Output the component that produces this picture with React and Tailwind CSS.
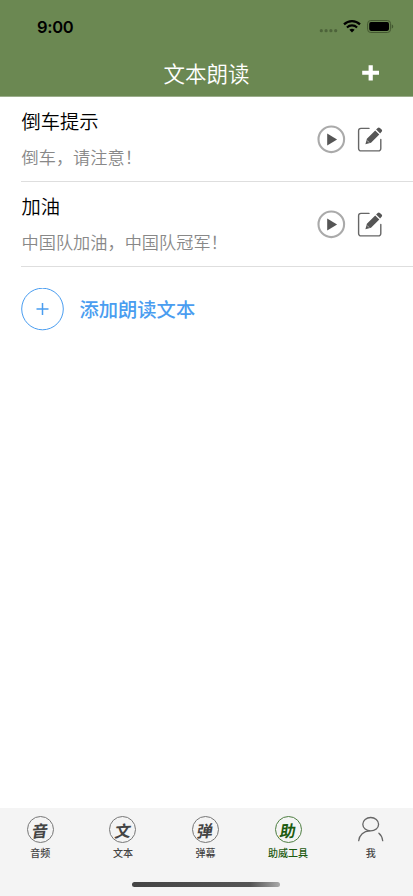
const rows = [
  { title: "倒车提示", text: "倒车，请注意！" },
  { title: "加油", text: "中国队加油，中国队冠军！" },
]

const tabs = [
  { glyph: "音", label: "音频" },
  { glyph: "文", label: "文本" },
  { glyph: "弹", label: "弹幕" },
  { glyph: "助", label: "助威工具", active: true },
  { label: "我" },
]

export default function App() {
  return (
    <div className="flex h-[896px] w-[413px] flex-col overflow-hidden bg-white font-['Noto_Sans_CJK_SC',sans-serif] text-black">
      {/* Header */}
      <header className="h-[97px] shrink-0 border-b border-[#9bad8b] bg-[#6b8852]">
        <StatusBar />
        <div className="grid h-[51px] grid-cols-[84px_1fr_84px] items-center">
          <span />
          <h1 className="text-center text-[21.5px] leading-[30px] font-[350] text-white">文本朗读</h1>
          <button className="flex justify-center pt-px" aria-label="添加">
            <svg width="18" height="18" viewBox="0 0 18 18" fill="#fff">
              <path d="M6.6 1.2h4.2v5.5H17v4.1h-6.2v5.6H6.6v-5.6H.2V6.7h6.4z" />
            </svg>
          </button>
        </div>
      </header>

      {/* List */}
      <main className="flex-1">
        {rows.map((row) => (
          <TextRow key={row.title} title={row.title} text={row.text} />
        ))}
        <button className="flex h-[84px] items-center gap-[15.5px] pl-[21px] text-[#4a9df0]">
          <svg width="43" height="43" viewBox="0 0 43 43" fill="none" stroke="currentColor">
            <circle cx="21.5" cy="21" r="20.8" strokeWidth="1" />
            <path d="M21.5 15v12M15.5 21h12" strokeWidth="1.5" />
          </svg>
          <span className="text-[19.3px] leading-7 font-medium">添加朗读文本</span>
        </button>
      </main>

      {/* Tab bar */}
      <nav className="flex h-[88px] shrink-0 flex-col bg-[#f4f4f4]">
        <div className="mr-px -ml-px grid h-[74px] grid-cols-5">
          {tabs.map((tab) => (
            <Tab key={tab.label} {...tab} />
          ))}
        </div>
        <div className="ml-[132px] h-[5px] w-[148px] rounded-full bg-linear-to-r from-[#444] via-[#555] via-80% to-[#aaa]" />
      </nav>
    </div>
  )
}

function StatusBar() {
  return (
    <div className="flex h-[47px] items-center justify-between pt-[6px] pr-[19px] pl-[37px]">
      <span className="font-[Inter,sans-serif] text-[16.5px] leading-5 font-semibold tracking-[-0.3px]">9:00</span>
      <div className="flex items-center">
        <svg width="20" height="14" viewBox="0 0 20 14" fill="#4d633a">
          <circle cx="2.3" cy="10.7" r="1.6" />
          <circle cx="7.1" cy="10.7" r="1.6" />
          <circle cx="11.9" cy="10.7" r="1.6" />
          <circle cx="16.7" cy="10.7" r="1.6" />
        </svg>
        <svg className="ml-[4px]" width="18" height="14" viewBox="0 0 18 14" fill="none" stroke="#000">
          <path d="M1 4.4a11.5 11.5 0 0 1 16 0" strokeWidth="2.2" />
          <path d="M3.9 7.4a7.4 7.4 0 0 1 10.2 0" strokeWidth="2.1" />
          <path d="M6.4 9.8a3.9 3.9 0 0 1 5.2 0L9 12.4z" fill="#000" stroke="none" />
        </svg>
        <svg className="ml-[6px]" width="27" height="14" viewBox="0 0 27 14">
          <rect x=".6" y=".5" width="23" height="12" rx="3.2" fill="none" stroke="#435730" />
          <rect x="2.2" y="2.1" width="19.8" height="8.8" rx="1.8" />
          <path d="M24.8 4.5v4c.9-.3 1.4-1.1 1.4-2s-.5-1.7-1.4-2z" fill="#435730" />
        </svg>
      </div>
    </div>
  )
}

function TextRow({ title, text }) {
  return (
    <div className="ml-[21px] flex h-[85px] items-center justify-between border-b border-[#dedede] pr-[29px]">
      <div className="pb-[2px] pl-[0.5px]">
        <h2 className="text-[19.3px] leading-[30px] font-[350]">{title}</h2>
        <p className="mt-[7px] text-[17.2px] leading-7 font-[350] text-[#888]">{text}</p>
      </div>
      <div className="flex items-center gap-[11px]">
        <svg width="29" height="29" viewBox="0 0 29 29">
          <circle cx="14.3" cy="14.3" r="12.8" fill="none" stroke="#aaa" strokeWidth="2.1" />
          <path d="M10.2 8.4v12l9.9-6z" fill="#555" />
        </svg>
        <svg width="27" height="27" viewBox="0 0 27 27">
          <path
            d="M12 2.4H4A2.4 2.4 0 0 0 1.6 4.8v17.7a2.4 2.4 0 0 0 2.4 2.4h17.4a2.4 2.4 0 0 0 2.4-2.4v-9"
            fill="none"
            stroke="#666"
            strokeWidth="1.4"
            strokeLinecap="round"
          />
          <path d="m8.4 18.2 1.5-5.5 8.3-8.3 4.1 4.1-8.3 8.2zM19.1 3.5l1.6-1.6c.7-.7 1.5-.7 2.2 0l1.7 1.7c.7.7.7 1.5 0 2.2L23.1 7.5z" fill="#555" />
          <path d="m10 14.4 2.2 2.2" stroke="#ddd" strokeWidth=".7" />
        </svg>
      </div>
    </div>
  )
}

function Tab({ glyph, label, active }) {
  return (
    <button className={`flex flex-col items-center pt-2 ${active ? "text-[#1d5b10]" : "text-[#444]"}`}>
      {glyph ? (
        <span
          className={`flex size-[27px] items-center justify-center rounded-full border ${
            active ? "border-[#4e7f42]" : "border-[#777]"
          }`}
        >
          <span className="-rotate-3 -skew-x-12 text-[16px] leading-none font-bold">{glyph}</span>
        </span>
      ) : (
        <svg width="27" height="27" viewBox="0 0 27 27" fill="none" stroke="#666" strokeWidth="1.3" strokeLinecap="round">
          <ellipse cx="13.7" cy="8.2" rx="7.9" ry="6.7" />
          <path d="M1.7 24.7C2.3 19 6.7 14.9 12.7 14.9M21.9 17.2c2.2 1.8 3.5 4.4 3.8 7.5" />
        </svg>
      )}
      <span className="mt-[2px] text-[10px] leading-[15px] font-medium">{label}</span>
    </button>
  )
}
